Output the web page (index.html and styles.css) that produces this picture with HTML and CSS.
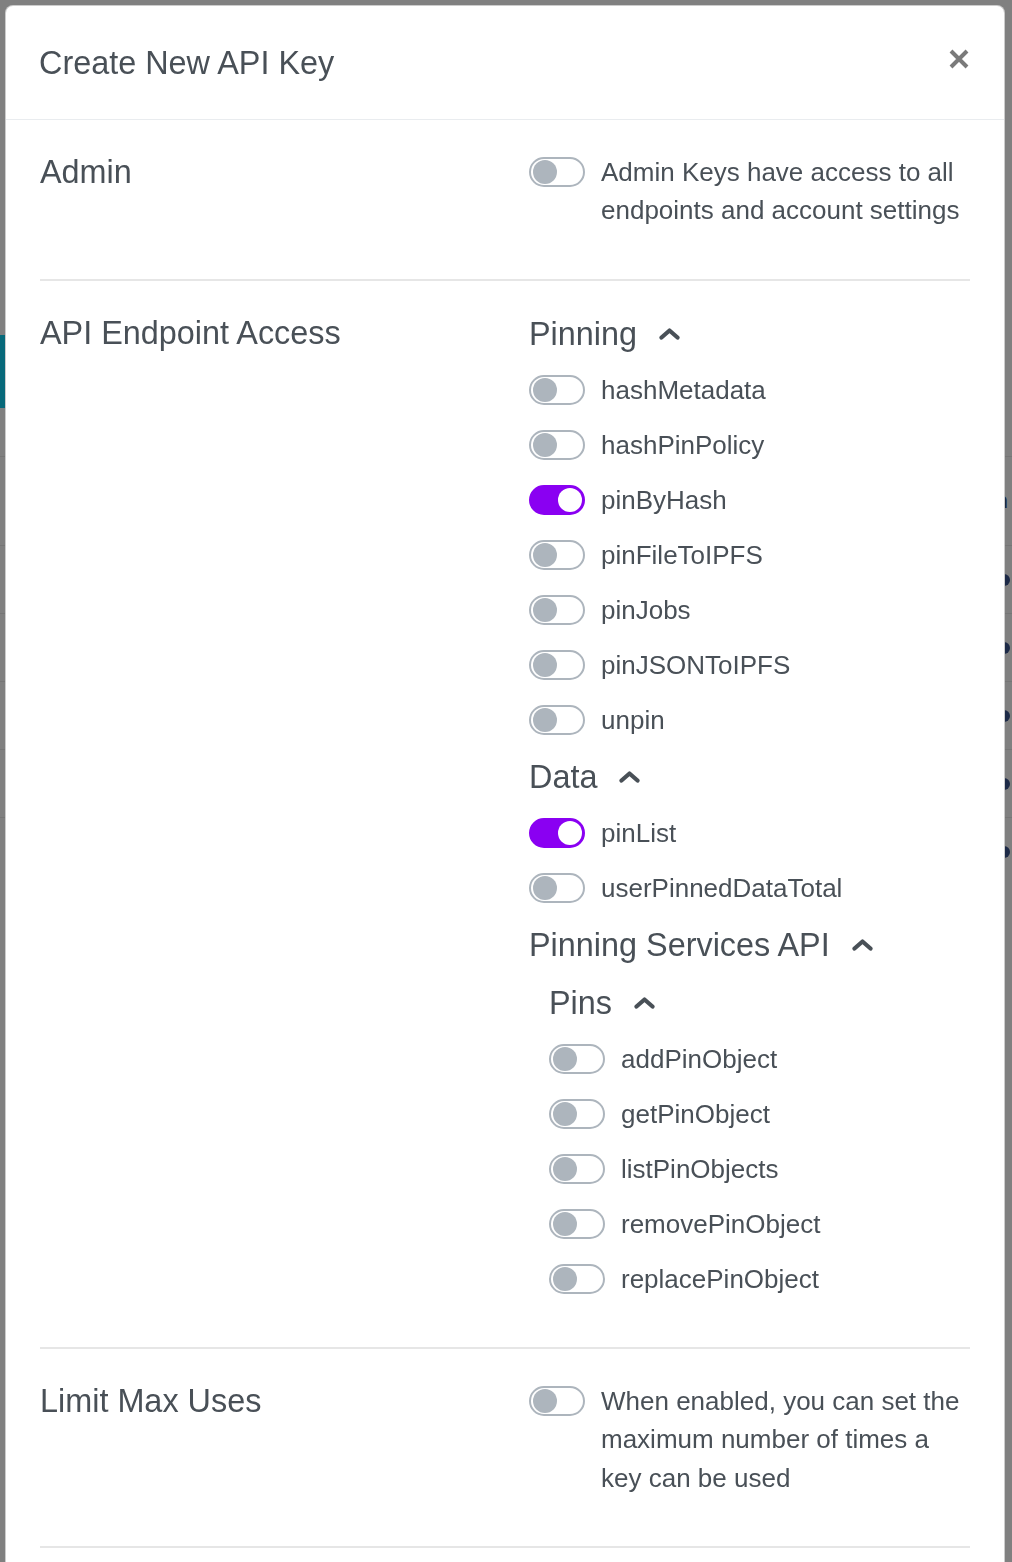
FILE: index.html
```html
<!DOCTYPE html>
<html lang="en">
<head>
<meta charset="utf-8">
<title>Create New API Key</title>
<link rel="stylesheet" href="styles.css">
</head>
<body>
<div class="bg-page">
  <div class="bg-spacer-top"></div>
  <div class="bg-active"></div>
  <div class="bg-spacer-mid"></div>
  <div class="bg-row bg-row-first"><span class="bg-text">Plan</span></div>
  <div class="bg-row"><span class="bg-dot"></span></div>
  <div class="bg-row"><span class="bg-dot"></span></div>
  <div class="bg-row"><span class="bg-dot"></span></div>
  <div class="bg-row"><span class="bg-dot"></span></div>
  <div class="bg-row"><span class="bg-dot"></span></div>
</div>

<div class="overlay">
  <div class="modal">
    <div class="modal-header">
      <h2 class="modal-title">Create New API Key</h2>
      <button class="close" type="button" aria-label="Close">
        <svg width="20" height="20" viewBox="0 0 20 20"><path d="M2 2 L18 18 M18 2 L2 18" stroke="#7a7a7a" stroke-width="4" fill="none"/></svg>
      </button>
    </div>
    <div class="modal-body">
      <section class="section">
        <div class="label">Admin</div>
        <div class="switch-row">
          <span class="toggle"></span>
          <p class="desc">Admin Keys have access to all endpoints and account settings</p>
        </div>
      </section>

      <section class="section">
        <div class="label">API Endpoint Access</div>
        <div class="perms">
          <div class="grp-title">Pinning <svg class="chev" width="21" height="12" viewBox="0 0 21 12"><path d="M2.5 9.5 L10.5 2.5 L18.5 9.5" stroke="#495057" stroke-width="4.2" fill="none" stroke-linecap="round" stroke-linejoin="round"/></svg></div>
          <div class="perm"><span class="toggle"></span>hashMetadata</div>
          <div class="perm"><span class="toggle"></span>hashPinPolicy</div>
          <div class="perm"><span class="toggle on"></span>pinByHash</div>
          <div class="perm"><span class="toggle"></span>pinFileToIPFS</div>
          <div class="perm"><span class="toggle"></span>pinJobs</div>
          <div class="perm"><span class="toggle"></span>pinJSONToIPFS</div>
          <div class="perm"><span class="toggle"></span>unpin</div>

          <div class="grp-title">Data <svg class="chev" width="21" height="12" viewBox="0 0 21 12"><path d="M2.5 9.5 L10.5 2.5 L18.5 9.5" stroke="#495057" stroke-width="4.2" fill="none" stroke-linecap="round" stroke-linejoin="round"/></svg></div>
          <div class="perm"><span class="toggle on"></span>pinList</div>
          <div class="perm"><span class="toggle"></span>userPinnedDataTotal</div>

          <div class="grp-title">Pinning Services API <svg class="chev" width="21" height="12" viewBox="0 0 21 12"><path d="M2.5 9.5 L10.5 2.5 L18.5 9.5" stroke="#495057" stroke-width="4.2" fill="none" stroke-linecap="round" stroke-linejoin="round"/></svg></div>
          <div class="subgroup">
            <div class="grp-title">Pins <svg class="chev" width="21" height="12" viewBox="0 0 21 12"><path d="M2.5 9.5 L10.5 2.5 L18.5 9.5" stroke="#495057" stroke-width="4.2" fill="none" stroke-linecap="round" stroke-linejoin="round"/></svg></div>
            <div class="perm"><span class="toggle"></span>addPinObject</div>
            <div class="perm"><span class="toggle"></span>getPinObject</div>
            <div class="perm"><span class="toggle"></span>listPinObjects</div>
            <div class="perm"><span class="toggle"></span>removePinObject</div>
            <div class="perm"><span class="toggle"></span>replacePinObject</div>
          </div>
        </div>
      </section>

      <section class="section">
        <div class="label">Limit Max Uses</div>
        <div class="switch-row">
          <span class="toggle"></span>
          <p class="desc">When enabled, you can set the maximum number of times a key can be used</p>
        </div>
      </section>

      <div class="body-rest"></div>
    </div>
  </div>
</div>
</body>
</html>
```

FILE: styles.css
```css
html, body {
  margin: 0;
  padding: 0;
  height: 100%;
  overflow: hidden;
}

body {
  background: #808080;
  font-family: "Liberation Sans", Arial, Helvetica, sans-serif;
  color: #495057;
}

/* dimmed page behind the modal */
.bg-page {
  display: flex;
  flex-direction: column;
  height: 1562px;
  background: #808080;
}
.bg-spacer-top { height: 335px; flex: none; }
.bg-active { width: 5px; height: 73px; background: #07697a; flex: none; }
.bg-spacer-mid { height: 48px; flex: none; }
.bg-row {
  flex: none;
  height: 67px;
  border-top: 1px solid #767676;
  display: flex;
  align-items: center;
  justify-content: flex-end;
  padding-right: 2px;
}
.bg-row-first { height: 88px; }
.bg-text {
  font-size: 22px;
  font-weight: 700;
  color: #1c2940;
  padding-right: 2px;
}
.bg-dot {
  width: 12px;
  height: 12px;
  border-radius: 50%;
  background: #1d2a47;
}

/* overlay + modal */
.overlay {
  position: fixed;
  inset: 0;
  overflow: hidden;
  padding: 5px 0 0 5px;
}

.modal {
  box-sizing: border-box;
  width: 1000px;
  background: #fff;
  border: 1px solid rgba(0, 0, 0, 0.2);
  border-radius: 8px;
}

.modal-header {
  display: flex;
  justify-content: space-between;
  align-items: flex-start;
  padding: 38px 35px 37px 33px;
  border-bottom: 1px solid #e9ecef;
}

.modal-title {
  margin: 0;
  font-size: 32.4px;
  line-height: 38px;
  font-weight: 400;
  color: #495057;
}

.close {
  margin-top: 5px;
  padding: 0;
  border: 0;
  background: transparent;
  width: 20px;
  height: 20px;
  display: block;
  cursor: pointer;
}
.close svg { display: block; }

.modal-body {
  padding: 0 34px;
}

.body-rest {
  height: 200px;
}

.section {
  display: grid;
  grid-template-columns: 489px 1fr;
  padding: 33px 0 32px;
  border-bottom: 2px solid #e6e6e6;
}

.label {
  font-size: 32.4px;
  line-height: 38.4px;
}

.switch-row {
  display: flex;
  align-items: flex-start;
  gap: 16px;
}
.switch-row .toggle { margin-top: 4px; }

.desc {
  margin: 0 0 17px;
  font-size: 26px;
  line-height: 38.4px;
}

.perms {
  display: flex;
  flex-direction: column;
}

.grp-title {
  display: flex;
  align-items: center;
  gap: 22px;
  font-size: 32.4px;
  line-height: 40px;
  margin: 1px 0 17px;
}
.perms > .grp-title:first-child { margin-top: 0; }
.chev { display: block; flex: none; }

.subgroup {
  padding-left: 20px;
  display: flex;
  flex-direction: column;
}

.perm {
  display: flex;
  align-items: center;
  gap: 16px;
  height: 39px;
  margin-bottom: 16px;
  font-size: 26px;
}

.toggle {
  flex: none;
  box-sizing: border-box;
  position: relative;
  width: 56px;
  height: 30px;
  border: 2px solid #adb5bd;
  border-radius: 15px;
  background: #fff;
}
.toggle::after {
  content: "";
  position: absolute;
  top: 1px;
  left: 1.5px;
  width: 24px;
  height: 24px;
  border-radius: 50%;
  background: #adb5bd;
}
.toggle.on {
  background: #8a00f2;
  border-color: #8a00f2;
}
.toggle.on::after {
  left: auto;
  right: 1.5px;
  background: #fff;
}
```
